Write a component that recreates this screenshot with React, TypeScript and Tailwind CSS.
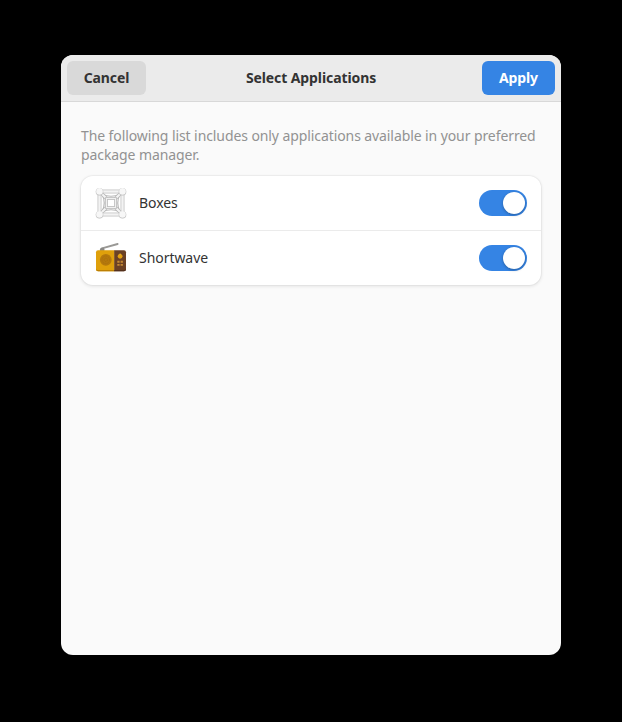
import React, { useState } from 'react';

function BoxesIcon() {
  const corners = [[4.5, 4.5], [27.5, 4.5], [4.5, 27.5], [27.5, 27.5]];
  return (
    <svg width="32" height="32" viewBox="0 0 32 32" fill="none" aria-hidden="true">
      <rect x="4.5" y="4.5" width="23" height="23" stroke="#c6c6c6" strokeWidth="4" />
      <rect x="4.5" y="4.5" width="23" height="23" stroke="#f3f3f3" strokeWidth="2.3" />
      <path d="M7 7q9 4.5 18 0M7 25q9-4.5 18 0M7 7q4.5 9 0 18M25 7q-4.5 9 0 18" stroke="#b8b8b8" strokeWidth="1.2" />
      <path d="M6 6l5.5 5.5M26 6l-5.5 5.5M6 26l5.5-5.5M26 26l-5.5-5.5" stroke="#b8b8b8" strokeWidth="3.4" />
      <path d="M6 6l6 6M26 6l-6 6M6 26l6-6M26 26l-6-6" stroke="#f4f4f4" strokeWidth="2" />
      <rect x="11.5" y="11.5" width="9" height="9" fill="#ffffff" stroke="#b5b5b5" strokeWidth="2.6" />
      <rect x="11.5" y="11.5" width="9" height="9" stroke="#f0f0f0" strokeWidth="1.2" />
      {corners.map(([x, y]) => (
        <g key={`${x}-${y}`}>
          <circle cx={x} cy={y + 0.3} r="3.8" fill="#bdbdbd" />
          <circle cx={x} cy={y - 0.1} r="3.3" fill="#f7f7f7" />
        </g>
      ))}
    </svg>
  );
}

function RadioIcon() {
  return (
    <svg width="32" height="32" viewBox="0 0 32 32" fill="none" aria-hidden="true">
      <path d="M7 6.4L22.6 2" stroke="#9a9996" strokeWidth="1.9" strokeLinecap="round" />
      <path d="M5 9V7.3Q5 5.8 6.5 5.8H8Q9.4 5.8 9.4 7.3V9z" fill="#8a8986" />
      <path d="M3 8.2H19.5V29.2H3Q1 29.2 1 27.2V10.2Q1 8.2 3 8.2z" fill="#dfa00b" />
      <path d="M19.2 8.2H29Q31 8.2 31 10.2V27.2Q31 29.2 29 29.2H19.2z" fill="#6b4124" />
      <path d="M1 26.8Q1 28 3 28H19.2V29.2H3Q1 29.2 1 27.2z" fill="#bd8004" />
      <path d="M19.2 28H29Q31 28 31 26.8V27.2Q31 29.2 29 29.2H19.2z" fill="#54301c" />
      <circle cx="10.8" cy="17.8" r="5.9" fill="#b5790c" />
      <circle cx="10.8" cy="17.8" r="3.8" stroke="#a46b0f" strokeWidth=".8" strokeDasharray="1 1" />
      <circle cx="10.8" cy="17.8" r="1.7" stroke="#a46b0f" strokeWidth=".8" strokeDasharray="1 1" />
      <circle cx="25.1" cy="14.3" r="2.4" fill="#e2a010" />
      <path d="M25.1 11.4v1.7" stroke="#f5c542" strokeWidth=".8" />
      <path d="M22.3 18.8h2.3v2h-2.3zM25.6 18.8h2.3v2h-2.3zM22.3 22h2.3v1.8h-2.3zM25.6 22h2.3v1.8h-2.3z" fill="#c58a35" />
    </svg>
  );
}

function Switch({ label }: { label: string }) {
  const [on, setOn] = useState(true);
  return (
    <button
      role="switch"
      aria-checked={on}
      aria-label={label}
      onClick={() => setOn(!on)}
      className={`flex h-[26px] w-12 items-center rounded-full p-0.5 ${on ? 'justify-end bg-[#3584e4]' : 'justify-start bg-[#d5d5d5]'}`}
    >
      <span className="size-[22px] rounded-full bg-white shadow-[0_1px_3px_rgba(0,0,0,0.3)]" />
    </button>
  );
}

function AppRow({ name, children }: { name: string; children: React.ReactNode }) {
  return (
    <li className="box-content flex h-[54px] items-center px-3.5">
      {children}
      <span className="ml-3 flex-1 text-sm leading-5 tracking-[-0.05px] text-[#333333]">{name}</span>
      <Switch label={name} />
    </li>
  );
}

export default function App() {
  return (
    <div className="flex h-[722px] w-[622px] items-start justify-center bg-black pt-[55px] font-['Noto_Sans',sans-serif]">
      <main className="h-[600px] w-[500px] overflow-hidden rounded-xl bg-[#fafafa]">
        <header className="grid h-[47px] grid-cols-[1fr_auto_1fr] items-center border-b border-[#d8d8d8] bg-[#ebebeb] px-1.5 text-sm font-bold tracking-[-0.1px] text-[#333333]">
          <button className="h-[34px] w-[79px] rounded-md bg-[#d9d9d9]">Cancel</button>
          <h1>Select Applications</h1>
          <button className="h-[34px] w-[73px] justify-self-end rounded-md bg-[#3584e4] text-white">Apply</button>
        </header>
        <div className="px-5 pt-6">
          <p className="whitespace-nowrap text-sm leading-[19px] tracking-[-0.09px] text-[#929292]">
            The following list includes only applications available in your preferred
            <br />
            package manager.
          </p>
          <ul className="mt-3 divide-y divide-[#ebebeb] rounded-xl bg-white shadow-[0_1px_3px_1px_rgba(0,0,0,0.07),0_0_0_1px_rgba(0,0,0,0.03)]">
            <AppRow name="Boxes"><BoxesIcon /></AppRow>
            <AppRow name="Shortwave"><RadioIcon /></AppRow>
          </ul>
        </div>
      </main>
    </div>
  );
}
